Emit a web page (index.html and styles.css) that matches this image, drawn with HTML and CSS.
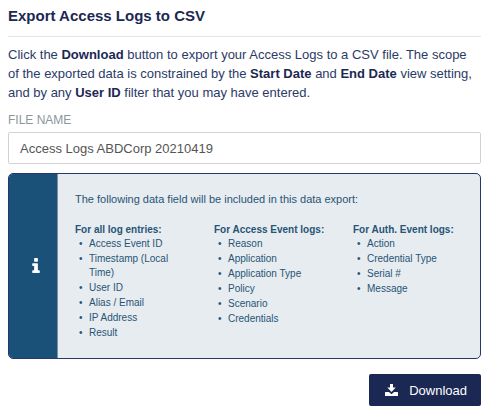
FILE: index.html
```html
<!DOCTYPE html>
<html lang="en">
<head>
<meta charset="utf-8">
<meta name="viewport" content="width=device-width, initial-scale=1">
<title>Export Access Logs to CSV</title>
<link rel="stylesheet" href="styles.css">
</head>
<body>
<main class="export">
  <h1 class="title">Export Access Logs to CSV</h1>
  <p class="intro">Click the <b>Download</b> button to export your Access Logs to a CSV file. The scope of the exported data is constrained by the <b>Start Date</b> and <b>End Date</b> view setting, and by any <b>User ID</b> filter that you may have entered.</p>
  <form class="form">
    <label class="label" for="file-name">FILE NAME</label>
    <input class="input" id="file-name" type="text" value="Access Logs ABDCorp 20210419">
    <section class="info">
      <div class="info-side">
        <svg class="info-icon" viewBox="0 0 8 16" aria-hidden="true"><path d="M2.500 0h3q.5 0 .5.5v3q0 .5-.5.5h-3Q2 4 2 3.500v-3Q2 0 2.500 0zM.5 5.500h5q.5 0 .5.500v7h1.500q.5 0 .5.500v2q0 .5-.5.500h-7Q0 16 0 15.500v-2Q0 13 .5 13H2V8.500H.5Q0 8.500 0 8V6q0-.5.5-.5z"/></svg>
      </div>
      <div class="info-body">
        <p class="info-lead">The following data field will be included in this data export:</p>
        <div class="columns">
          <div>
            <h2 class="column-title">For all log entries:</h2>
            <ul class="list">
              <li>Access Event ID</li>
              <li>Timestamp (Local Time)</li>
              <li>User ID</li>
              <li>Alias / Email</li>
              <li>IP Address</li>
              <li>Result</li>
            </ul>
          </div>
          <div>
            <h2 class="column-title">For Access Event logs:</h2>
            <ul class="list">
              <li>Reason</li>
              <li>Application</li>
              <li>Application Type</li>
              <li>Policy</li>
              <li>Scenario</li>
              <li>Credentials</li>
            </ul>
          </div>
          <div>
            <h2 class="column-title">For Auth. Event logs:</h2>
            <ul class="list">
              <li>Action</li>
              <li>Credential Type</li>
              <li>Serial #</li>
              <li>Message</li>
            </ul>
          </div>
        </div>
      </div>
    </section>
    <button class="button" type="button">
      <svg class="button-icon" viewBox="0 0 13 12" aria-hidden="true"><path d="M5 0h3v3.500h2.700L6.500 8 2.300 3.500H5zM.5 8h3.400l2.600 2.200L9.100 8h3.400q.5 0 .5.500v3q0 .5-.5.500H.5Q0 12 0 11.500v-3Q0 8 .5 8z"/></svg>
      Download
    </button>
  </form>
</main>
</body>
</html>
```
FILE: styles.css
```css
*,
*::before {
  box-sizing: border-box;
}

body {
  margin: 0;
  padding: 6px 8px 8px;
  background: #fff;
  color: #2b3a67;
  font-family: "Liberation Sans", Arial, sans-serif;
  font-size: 13px;
  line-height: 19px;
}

.title {
  margin: 0;
  padding-bottom: 10px;
  border-bottom: 1px solid #e3e5e8;
  color: #1b2853;
  font-size: 15px;
  line-height: 20px;
}

.intro {
  margin: 8px 0 0;
}

.intro b {
  color: #1b2853;
}

.form {
  display: flex;
  flex-direction: column;
}

.label {
  margin-top: 9px;
  color: #8b979b;
  font-size: 12px;
  line-height: 18px;
}

.input {
  width: 100%;
  height: 32px;
  margin-top: 3px;
  padding: 0 11px;
  border: 1px solid #d0d2d5;
  border-radius: 2px;
  background: #fff;
  color: #555;
  font: inherit;
}

.info {
  display: flex;
  margin-top: 9px;
  border: 1px solid #25376c;
  border-radius: 5px;
  background: #e7ecf0;
  color: #285475;
  overflow: hidden;
}

.info-side {
  display: flex;
  flex: none;
  align-items: center;
  justify-content: center;
  width: 49px;
  padding: 0 0 2px 6px;
  border-right: 1px solid #7892aa;
  background: #1a5178;
}

.info-icon {
  width: 8px;
  height: 15px;
  fill: #fff;
}

.info-body {
  flex: 1;
  min-width: 0;
  padding: 17px 15px 18px 17px;
}

.info-lead {
  margin: 0;
  font-size: 11px;
  line-height: 16px;
}

.columns {
  display: grid;
  grid-template-columns: repeat(3, 1fr);
  column-gap: 27px;
  margin-top: 15px;
  font-size: 10px;
  line-height: 14px;
}

.column-title {
  margin: 0;
  font-size: inherit;
  line-height: 15px;
  white-space: nowrap;
}

.list {
  display: grid;
  row-gap: 1px;
  margin: 0;
  padding: 0;
  list-style: none;
}

.list li {
  display: flex;
}

.list li::before {
  content: "•";
  flex: none;
  width: 14px;
  padding-left: 4px;
}

.button {
  display: flex;
  align-items: center;
  align-self: flex-end;
  gap: 11px;
  height: 32px;
  margin-top: 15px;
  padding: 0 14px 0 16px;
  border: 0;
  border-radius: 2px;
  background: #1b2853;
  color: #fff;
  font: inherit;
}

.button-icon {
  width: 13px;
  height: 12px;
  fill: #fff;
}
```
